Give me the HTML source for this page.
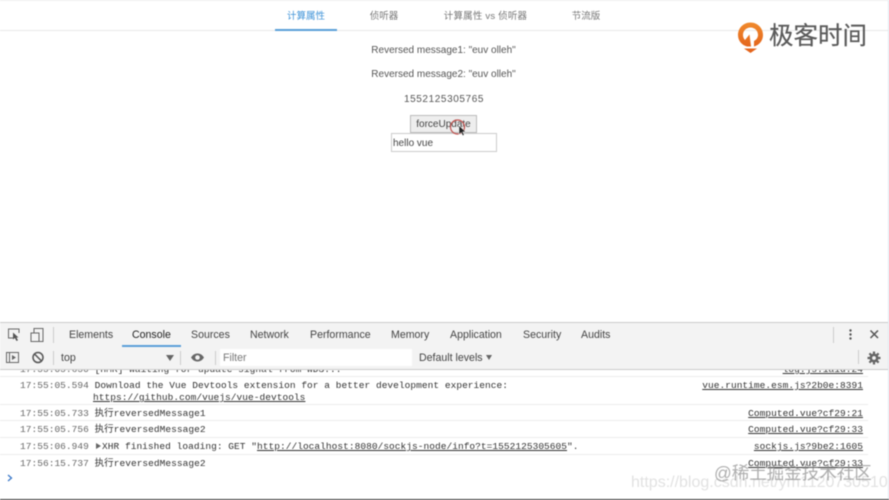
<!DOCTYPE html>
<html><head><meta charset="utf-8"><style>
html,body{margin:0;padding:0;background:#fff;}
#r{position:relative;width:889px;height:500px;overflow:hidden;background:#fff;font-family:"Liberation Sans","Noto Sans CJK SC",sans-serif;color:#555;filter:blur(.4px);}
.a{position:absolute;white-space:nowrap;}
.c{transform:translateX(-50%);}
.m{font-family:"Liberation Mono","Noto Sans CJK SC",monospace;font-size:9.5px;letter-spacing:.04px;color:#333;line-height:12px;}
.t{color:#666;}
.u{text-decoration:underline;}
.r{right:26px;}
.tab{font-size:10.6px;color:#444;top:329px;line-height:13px;}
.l{position:absolute;left:0;width:868px;height:1px;background:#ececec;}
</style></head><body><div id="r">
<div class="a" style="left:0;top:0;width:889px;height:1px;background:#eee"></div>
<div class="a" style="left:0;top:30px;width:889px;height:1px;background:#e8e8e8"></div>
<div class="a" style="left:275px;top:29px;width:62px;height:2px;background:#5a9fd8"></div>
<div class="a c" style="left:306px;top:10px;font-size:9.5px;line-height:13px;color:#3f93d8">计算属性</div>
<div class="a c" style="left:384px;top:10px;font-size:9.5px;line-height:13px;color:#777">侦听器</div>
<div class="a c" style="left:485.500px;top:10px;font-size:9.5px;line-height:13px;letter-spacing:.2px;color:#777">计算属性 vs 侦听器</div>
<div class="a c" style="left:586px;top:10px;font-size:9.5px;line-height:13px;color:#777">节流版</div>
<div class="a c" style="left:443.500px;top:44px;font-size:10px;line-height:13px">Reversed message1: "euv olleh"</div>
<div class="a c" style="left:443.500px;top:68px;font-size:10px;line-height:13px">Reversed message2: "euv olleh"</div>
<div class="a c" style="left:444px;top:93px;font-size:10px;line-height:13px;letter-spacing:.6px">1552125305765</div>
<div class="a" style="left:410px;top:115px;width:65px;height:16px;background:#eee;border:1px solid #bbb;font-size:10px;line-height:18px;text-align:center;color:#444">forceUpdate</div>
<div class="a" style="left:391px;top:133px;width:104px;height:17px;background:#fff;border:1px solid #ccc;font-size:10px;line-height:20px;text-indent:1px;color:#444">hello vue</div>
<svg class="a" style="left:448px;top:116px" width="22" height="24" viewBox="0 0 22 24"><circle cx="9.500" cy="11" r="7" fill="none" stroke="#c0524f" stroke-width="1.200"/><path d="M11 9.500v9l2.200-2 1.500 3.200 1.500-.8-1.500-3h3z" fill="#222" stroke="#fff" stroke-width=".5"/></svg>

<svg class="a" style="left:737px;top:21px" width="30" height="34" viewBox="0 0 30 34"><defs><linearGradient id="g" x1="0" y1="0" x2="0" y2="1"><stop offset="0" stop-color="#f08a2c"/><stop offset="1" stop-color="#e4651c"/></linearGradient></defs><path d="M10 25.500C4.500 24 1 19.500 1 14C1 7 6.500 1.500 13.500 1.500S26 7 26 14C26 19.500 22.500 24 17 25.500L17 20C19.500 18.700 21 16.500 21 14C21 9.800 17.700 6.500 13.500 6.500S6 9.800 6 14C6 16 6.800 17.700 8 19L12.500 13.500L14 25.500Z" fill="url(#g)"/><path d="M7 27.500H20L13.500 32Z" fill="#e4651c"/></svg>
<div class="a" style="left:769px;top:23px;font-size:24.500px;line-height:28px;color:#5a5a5a;-webkit-text-stroke:.2px #5a5a5a">极客时间</div>

<div class="a" style="left:0;top:322px;width:889px;height:24px;background:#f3f3f3;border-top:1px solid #ccc;border-bottom:1px solid #ccc"></div>
<div class="a" style="left:0;top:347px;width:889px;height:22px;background:#f3f3f3;border-bottom:1px solid #ccc"></div>
<div class="a" style="left:122px;top:345px;width:59px;height:2px;background:#5a9fd8"></div>
<svg class="a" style="left:0;top:324px" width="60" height="22" viewBox="0 0 60 22" fill="none" stroke="#666"><path d="M14 14H8.500V5H19V9"/><path d="M13 8.500V15.500L14.800 14L16.500 17L18 16.200L16.500 13.500H18.500Z" fill="#555" stroke="none"/><rect x="31" y="9" width="8" height="8.500"/><path d="M34 9V4.500H43V17.500H39"/><path d="M53.500 3V19" stroke="#ccc"/></svg>
<div class="a tab" style="left:69px">Elements</div>
<div class="a tab" style="left:132px;color:#222">Console</div>
<div class="a tab" style="left:191px">Sources</div>
<div class="a tab" style="left:250px">Network</div>
<div class="a tab" style="left:310px">Performance</div>
<div class="a tab" style="left:391px">Memory</div>
<div class="a tab" style="left:450px">Application</div>
<div class="a tab" style="left:523px">Security</div>
<div class="a tab" style="left:581px">Audits</div>
<svg class="a" style="left:830px;top:324px" width="55" height="22" viewBox="0 0 55 22"><path d="M3.500 3V19" stroke="#ccc"/><circle cx="20.500" cy="6.500" r="1.200" fill="#555"/><circle cx="20.500" cy="10.500" r="1.200" fill="#555"/><circle cx="20.500" cy="14.500" r="1.200" fill="#555"/><path d="M40.500 6.500L48 14M48 6.500L40.500 14" stroke="#555" stroke-width="1.500"/></svg>

<svg class="a" style="left:0;top:348px" width="60" height="20" viewBox="0 0 60 20" fill="none"><rect x="6.500" y="4.500" width="12" height="10" stroke="#666"/><path d="M9.500 4.500V14.500" stroke="#666"/><path d="M12 7L16 9.500L12 12Z" fill="#666"/><circle cx="38" cy="9.500" r="5" stroke="#555" stroke-width="1.500"/><path d="M34.500 6L41.500 13" stroke="#555" stroke-width="1.500"/><path d="M53.500 3V17" stroke="#ccc"/></svg>
<div class="a" style="left:61px;top:352px;font-size:10.600px;line-height:13px;color:#444">top</div>
<div class="a" style="left:166px;top:355px;width:0;height:0;border-left:4px solid transparent;border-right:4px solid transparent;border-top:6px solid #666"></div>
<svg class="a" style="left:180px;top:348px" width="40" height="20" viewBox="0 0 40 20"><path d="M.500 3V17" stroke="#ccc"/><path d="M11 9.500C13 6.500 15 5.500 17.500 5.500S22 6.500 24 9.500C22 12.500 20 13.500 17.500 13.500S13 12.500 11 9.500Z" fill="#666"/><circle cx="17.500" cy="9.500" r="2.300" fill="#f3f3f3"/><path d="M35.500 3V17" stroke="#ccc"/></svg>
<div class="a" style="left:220px;top:349px;width:192px;height:17px;background:#fff;font-size:10.600px;line-height:19px;color:#777;text-indent:3px">Filter</div>
<div class="a" style="left:419px;top:352px;font-size:10.600px;line-height:13px;color:#444">Default levels</div>
<div class="a" style="left:486px;top:355px;width:0;height:0;border-left:3px solid transparent;border-right:3px solid transparent;border-top:5px solid #666"></div>
<div class="a" style="left:858px;top:350px;width:1px;height:14px;background:#ccc"></div>
<svg class="a" style="left:867px;top:351px" width="14" height="14" viewBox="0 0 14 14"><path d="M7 .5V13.500M.5 7H13.500M2.400 2.400L11.600 11.600M11.600 2.400L2.400 11.600" stroke="#666" stroke-width="2.200"/><circle cx="7" cy="7" r="4.500" fill="#666"/><circle cx="7" cy="7" r="1.900" fill="#f3f3f3"/></svg>

<div class="a" style="left:0;top:370px;width:889px;height:130px;overflow:hidden">
<div class="a m" style="left:20px;top:-6px"><span class="t">17:55:05.650</span> [HMR] Waiting for update signal from WDS...</div>
<div class="a m u" style="right:26px;top:-6px">log.js:1a1d:24</div>
<div class="l" style="top:6px"></div>
<div class="a m" style="left:20px;top:10px"><span class="t">17:55:05.594</span> Download the Vue Devtools extension for a better development experience:</div>
<div class="a m u" style="left:93px;top:22px">https://github.com/vuejs/vue-devtools</div>
<div class="a m u r" style="top:10px">vue.runtime.esm.js?2b0e:8391</div>
<div class="l" style="top:34px"></div>
<div class="a m" style="left:20px;top:38px"><span class="t">17:55:05.733</span> 执行reversedMessage1</div>
<div class="a m u r" style="top:38px">Computed.vue?cf29:21</div>
<div class="l" style="top:50px"></div>
<div class="a m" style="left:20px;top:54px"><span class="t">17:55:05.756</span> 执行reversedMessage2</div>
<div class="a m u r" style="top:54px">Computed.vue?cf29:33</div>
<div class="l" style="top:67px"></div>
<div class="a m" style="left:20px;top:71px"><span class="t">17:55:06.949</span></div>
<div class="a" style="left:96px;top:73px;width:0;height:0;border-top:3px solid transparent;border-bottom:3px solid transparent;border-left:5px solid #666"></div>
<div class="a m" style="left:102px;top:71px">XHR finished loading: GET "<span class="u">http://localhost:8080/sockjs-node/info?t=1552125305605</span>".</div>
<div class="a m u r" style="top:71px">sockjs.js?9be2:1605</div>
<div class="l" style="top:84px"></div>
<div class="a m" style="left:20px;top:88px"><span class="t">17:56:15.737</span> 执行reversedMessage2</div>
<div class="a m u r" style="top:88px">Computed.vue?cf29:33</div>
<svg class="a" style="left:6px;top:103px" width="8" height="10" viewBox="0 0 8 10"><path d="M2 2L5.500 5L2 8" fill="none" stroke="#3b78c9" stroke-width="1.300"/></svg>
</div>

<div class="a" style="left:631px;top:474px;font-size:16px;line-height:18px;color:#e2e2e2">https://blog.csdn.net/ym1120730510</div>
<div class="a" style="left:714px;top:462px;font-size:17.500px;line-height:22px;color:rgba(130,130,130,.65)">@稀土掘金技术社区</div>
<div class="a" style="left:0;top:499px;width:889px;height:1px;background:#333"></div>
<div class="a" style="left:888px;top:0;width:1px;height:499px;background:#dfe6ee"></div>
</div></body></html>
